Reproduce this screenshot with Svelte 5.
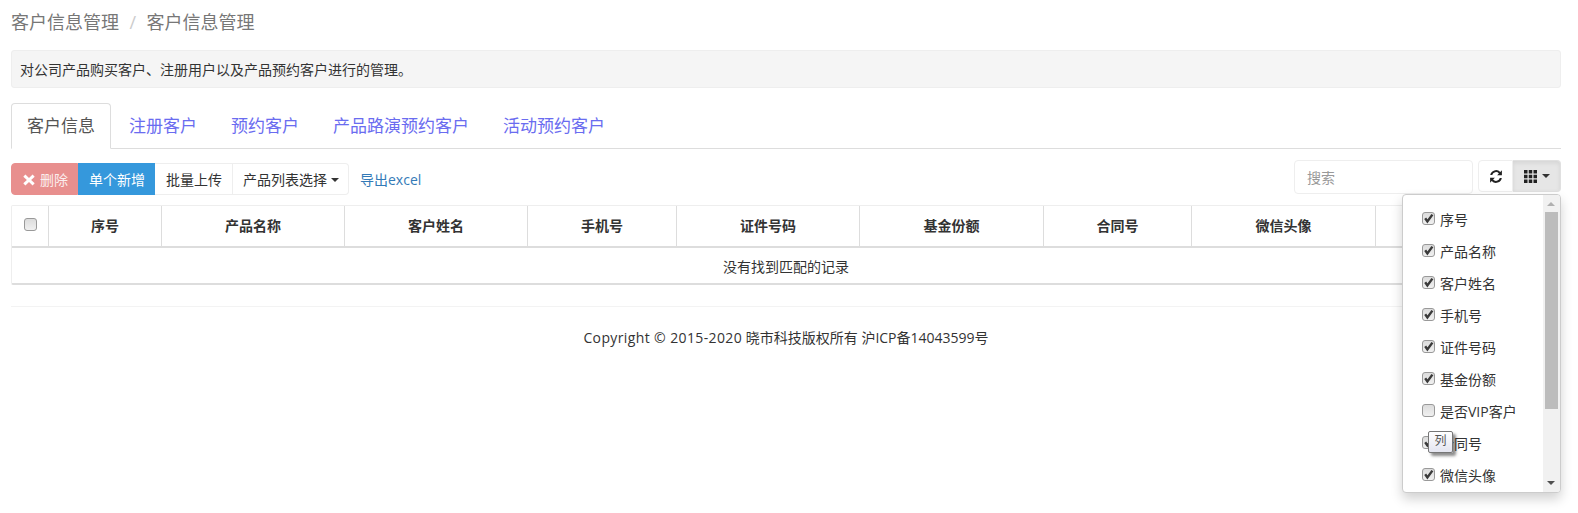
<script>
  const tabs = ['客户信息', '注册客户', '预约客户', '产品路演预约客户', '活动预约客户'];
  const columns = [
    { label: '序号', width: 113 },
    { label: '产品名称', width: 183 },
    { label: '客户姓名', width: 183 },
    { label: '手机号', width: 149 },
    { label: '证件号码', width: 183 },
    { label: '基金份额', width: 184 },
    { label: '合同号', width: 148 },
    { label: '微信头像', width: 184 },
    { label: '', width: 184 }
  ];
  const menu = [
    { label: '序号', on: true },
    { label: '产品名称', on: true },
    { label: '客户姓名', on: true },
    { label: '手机号', on: true },
    { label: '证件号码', on: true },
    { label: '基金份额', on: true },
    { label: '是否VIP客户', on: false },
    { label: '合同号', on: true },
    { label: '微信头像', on: true }
  ];
</script>

{#snippet box(on)}
  <span class="box">
    {#if on}
      <svg viewBox="0 0 13 13" width="13" height="13"><path d="M3.2 6.2 5.4 9.4 10.4 2.6" fill="none" stroke="#3a3a3a" stroke-width="2.4" /></svg>
    {/if}
  </span>
{/snippet}

<div class="page">
  <h1 class="crumb"><span>客户信息管理</span><span class="sep">/</span><span>客户信息管理</span></h1>
  <p class="well">对公司产品购买客户、注册用户以及产品预约客户进行的管理。</p>

  <ul class="tabs">
    {#each tabs as tab, i}
      <li class:active={i === 0}>{tab}</li>
    {/each}
  </ul>

  <div class="toolbar">
    <div class="group">
      <button class="btn danger">
        <svg viewBox="0 0 12 12" width="12" height="12"><path d="M2.4 0.6 6 4.1 9.6 0.6 11.7 2.7 8.1 6 11.7 9.3 9.6 11.4 6 7.9 2.4 11.4 0.3 9.3 3.9 6 0.3 2.7Z" fill="#fff" /></svg>
        <span>删除</span>
      </button>
      <button class="btn primary">单个新增</button>
      <button class="btn plain">批量上传</button>
      <button class="btn plain last">产品列表选择 <i class="caret"></i></button>
    </div>
    <a class="export" href="#top">导出excel</a>
    <div class="right">
      <input class="search" placeholder="搜索" />
      <div class="group tools">
        <button class="btn plain icon" aria-label="刷新">
          <svg viewBox="0 0 14 15" width="14" height="15"><path d="M12.9 1.2V6.2H8.1L9.9 4.4A3.9 3.9 0 0 0 3.2 6H1.2A5.9 5.9 0 0 1 11.3 3ZM1.1 13.8V8.8H5.9L4.1 10.6A3.9 3.9 0 0 0 10.8 9H12.8A5.9 5.9 0 0 1 2.7 12Z" fill="#222" /></svg>
        </button>
        <button class="btn plain icon open" aria-label="列">
          <svg viewBox="0 0 13 13" width="13" height="13" fill="#222"><rect x="0" y="0" width="3.5" height="3.5" /><rect x="4.75" y="0" width="3.5" height="3.5" /><rect x="9.5" y="0" width="3.5" height="3.5" /><rect x="0" y="4.75" width="3.5" height="3.5" /><rect x="4.75" y="4.75" width="3.5" height="3.5" /><rect x="9.5" y="4.75" width="3.5" height="3.5" /><rect x="0" y="9.5" width="3.5" height="3.5" /><rect x="4.75" y="9.5" width="3.5" height="3.5" /><rect x="9.5" y="9.5" width="3.5" height="3.5" /></svg>
          <i class="caret"></i>
        </button>
      </div>
    </div>
  </div>

  <div class="table">
    <div class="head">
      <div class="cell check">{@render box(false)}</div>
      {#each columns as col}
        <div class="cell" style="width:{col.width}px">{col.label}</div>
      {/each}
    </div>
    <div class="empty">没有找到匹配的记录</div>
  </div>

  <hr />
  <footer><span class="latin">Copyright © 2015-2020</span> 晓市科技版权所有 沪ICP备14043599号</footer>

  <div class="menu">
    <ul>
      {#each menu as item}
        <li>{@render box(item.on)}<span>{item.label}</span></li>
      {/each}
    </ul>
    <div class="scroll">
      <i class="arrow up"></i>
      <div class="thumb"></div>
      <i class="arrow down"></i>
    </div>
  </div>
  <div class="tip">列</div>
</div>

<style>
  :global(body) {
    margin: 0;
    background: #fff;
  }
  .page {
    position: relative;
    height: 513px;
    box-sizing: border-box;
    padding: 0 17px 0 11px;
    overflow: hidden;
    font: 14px/20px "Open Sans", "Noto Sans CJK SC", sans-serif;
    color: #333;
  }
  .crumb {
    display: flex;
    gap: 10.5px;
    margin: 0;
    padding-top: 9px;
    height: 50px;
    box-sizing: border-box;
    font-size: 18px;
    font-weight: 400;
    line-height: 26px;
    color: #777;
  }
  .sep {
    color: #ccc;
  }
  .well {
    margin: 0;
    height: 38px;
    box-sizing: border-box;
    padding: 9px 8px;
    background: #f5f5f5;
    border: 1px solid #eee;
    border-radius: 3px;
    font-size: 14px;
    line-height: 20px;
    color: #333;
  }
  .tabs {
    display: flex;
    list-style: none;
    margin: 15px 0 0;
    padding: 0;
    height: 45px;
    border-bottom: 1px solid #ddd;
  }
  .tabs li {
    box-sizing: border-box;
    height: 45px;
    margin-right: 2px;
    padding: 10px 15px;
    border: 1px solid transparent;
    border-radius: 4px 4px 0 0;
    font-size: 17px;
    line-height: 24px;
    color: #6a6cf0;
  }
  .tabs li.active {
    height: 46px;
    border-color: #ddd;
    border-bottom-color: #fff;
    background: #fff;
    color: #555;
  }
  .toolbar {
    display: flex;
    align-items: flex-start;
    margin-top: 14px;
    height: 42px;
  }
  .group {
    display: flex;
    height: 32px;
  }
  .btn {
    font: inherit;
    display: flex;
    align-items: center;
    gap: 5px;
    height: 32px;
    margin: 0;
    padding: 1px 10px 0;
    border: 1px solid transparent;
    background: #fff;
    color: #333;
    white-space: nowrap;
    box-sizing: border-box;
  }
  .danger {
    width: 67px;
    padding: 1px 0 0 11px;
    background: #e88f8e;
    border-color: #e88f8e;
    color: #fff;
    border-radius: 4px 0 0 4px;
  }
  .danger span {
    opacity: 0.85;
  }
  .primary {
    width: 77px;
    background: #3598dc;
    border-color: #3598dc;
    color: #fff;
  }
  .plain {
    padding-left: 11px;
    border-color: #eee;
    border-left-width: 0;
  }
  .last {
    padding-left: 10px;
    padding-right: 9px;
    gap: 4px;
    border-radius: 0 4px 4px 0;
  }
  .caret {
    display: inline-block;
    width: 0;
    height: 0;
    border-top: 4px solid #333;
    border-left: 4px solid transparent;
    border-right: 4px solid transparent;
  }
  .export {
    margin-left: 11px;
    line-height: 34px;
    color: #337ab7;
    text-decoration: none;
  }
  .right {
    display: flex;
    margin-left: auto;
    gap: 5px;
  }
  .search {
    box-sizing: border-box;
    width: 179px;
    height: 34px;
    margin-top: -3px;
    padding: 0 12px;
    border: 1px solid #eee;
    border-radius: 4px;
    font: inherit;
    color: #333;
    outline: none;
  }
  .search::placeholder {
    color: #999;
  }
  .tools {
    margin-top: -3px;
  }
  .icon {
    justify-content: center;
    width: 35px;
    padding: 0;
  }
  .tools .icon:first-child {
    border-left-width: 1px;
    border-radius: 4px 0 0 4px;
  }
  .tools .open {
    width: 48px;
    gap: 5px;
    background: #e6e6e6;
    border-color: #e0e0e0;
    border-radius: 0 4px 4px 0;
    box-shadow: inset 0 2px 4px rgba(0, 0, 0, 0.08);
  }
  .table {
    border: 1px solid #eee;
    border-bottom: 2px solid #ddd;
    border-radius: 2px;
    height: 80px;
    box-sizing: border-box;
    overflow: hidden;
  }
  .head {
    display: flex;
    height: 40px;
    border-bottom: 2px solid #ddd;
  }
  .cell {
    flex: none;
    box-sizing: border-box;
    border-right: 1px solid #ddd;
    text-align: center;
    font-weight: 700;
    line-height: 39px;
    color: #333;
  }
  .cell:last-child {
    border-right: 0;
  }
  .check {
    width: 37px;
    display: flex;
    justify-content: center;
    padding-top: 12px;
  }
  .box {
    flex: none;
    display: block;
    width: 13px;
    height: 13px;
    box-sizing: border-box;
    border: 1px solid #999;
    border-radius: 3px;
    background: linear-gradient(#dcdcdc, #f0f0f0);
    line-height: 0;
    position: relative;
  }
  .box svg {
    position: absolute;
    left: -1px;
    top: -1px;
  }
  .empty {
    text-align: center;
    height: 35px;
    line-height: 37px;
    color: #333;
  }
  hr {
    border: 0;
    border-top: 1px solid #f3f3f3;
    margin: 21px 0 0;
  }
  footer {
    text-align: center;
    margin: 21px 0 0;
    color: #333;
    line-height: 20px;
  }
  .latin {
    letter-spacing: 0.38px;
  }
  .menu {
    position: absolute;
    left: 1402px;
    top: 194px;
    width: 159px;
    height: 299px;
    box-sizing: border-box;
    display: flex;
    background: #fff;
    border: 1px solid #ccc;
    border-radius: 4px;
    box-shadow: 0 6px 12px rgba(0, 0, 0, 0.18);
    overflow: hidden;
  }
  .menu ul {
    flex: 1;
    list-style: none;
    margin: 0;
    padding: 8px 0 0 19px;
  }
  .menu li {
    display: flex;
    align-items: flex-start;
    gap: 5px;
    height: 32px;
    line-height: 33px;
    color: #333;
  }
  .menu li .box {
    margin-top: 9px;
  }
  .scroll {
    position: relative;
    width: 17px;
    background: #f1f1f1;
  }
  .thumb {
    position: absolute;
    left: 2px;
    top: 17px;
    width: 13px;
    height: 197px;
    background: #bcbcbc;
  }
  .arrow {
    position: absolute;
    left: 4px;
    width: 0;
    height: 0;
    border-left: 4px solid transparent;
    border-right: 4px solid transparent;
  }
  .arrow.up {
    top: 7px;
    border-bottom: 4px solid #b0b0b0;
  }
  .arrow.down {
    bottom: 7px;
    border-top: 4px solid #505050;
  }
  .tip {
    position: absolute;
    left: 1428px;
    top: 431px;
    width: 25px;
    height: 22px;
    box-sizing: border-box;
    text-align: center;
    font-size: 12px;
    line-height: 18px;
    color: #555;
    background: linear-gradient(#fff, #e4e5f0);
    border: 1px solid #767676;
    border-radius: 2px;
    box-shadow: 3px 3px 3px rgba(0, 0, 0, 0.45);
  }
</style>
